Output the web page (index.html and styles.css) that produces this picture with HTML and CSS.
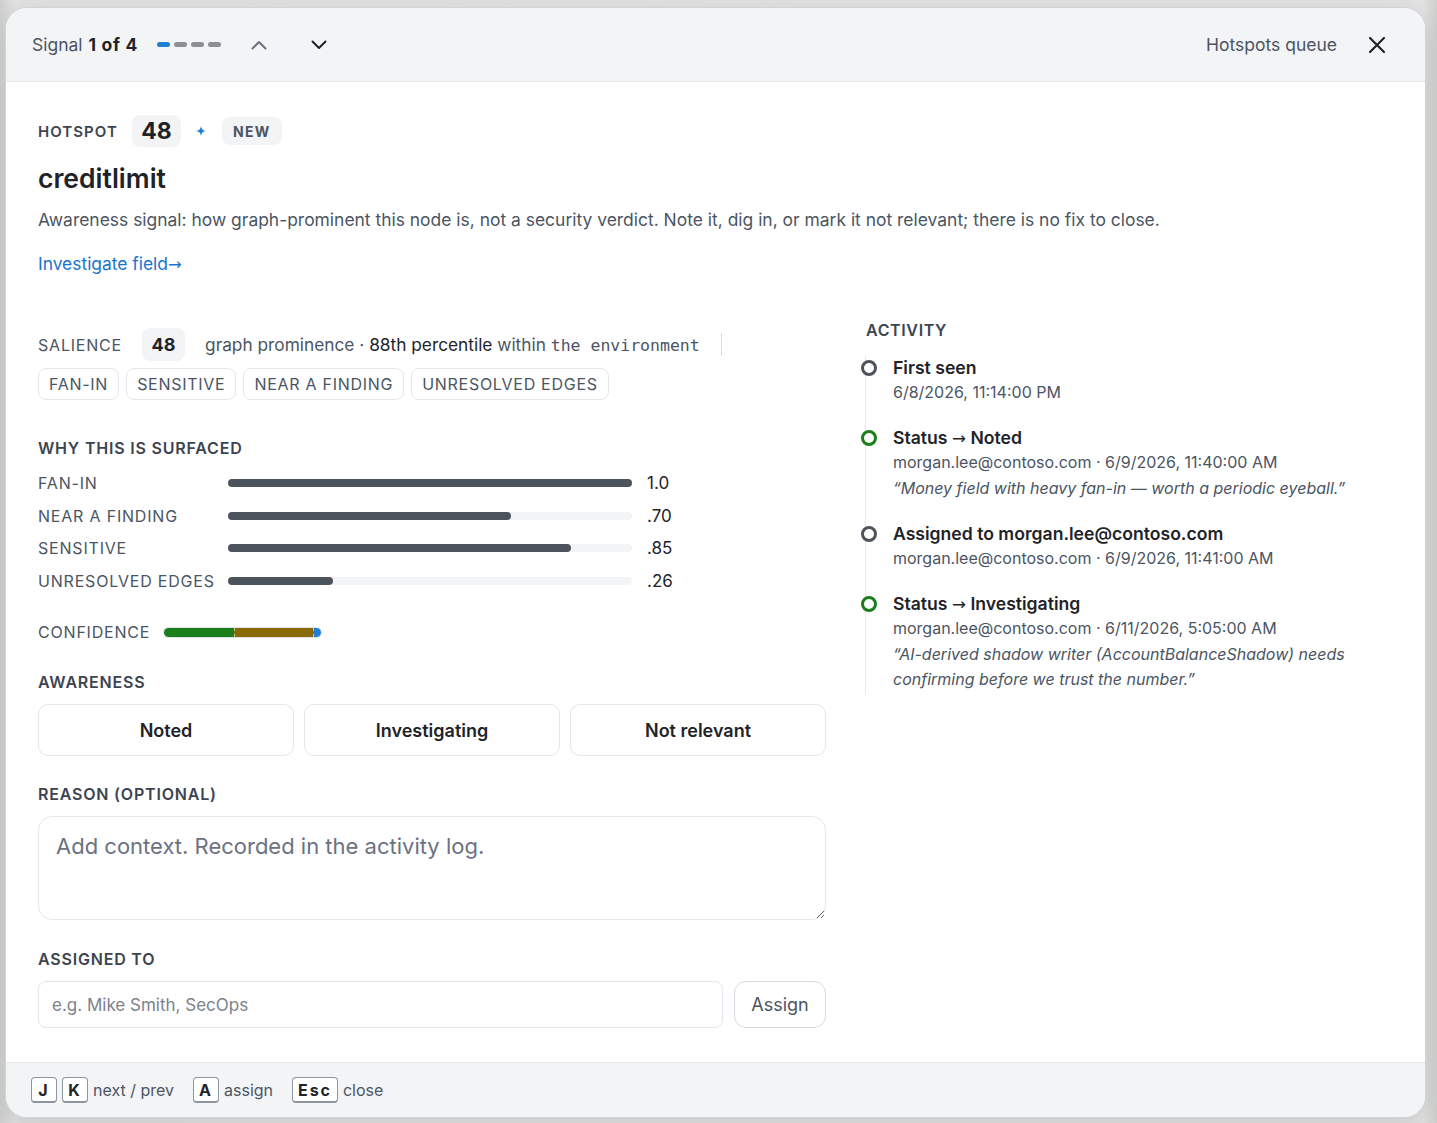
FILE: index.html
```html
<!DOCTYPE html>
<html>
<head>
	<meta charset="utf-8">
	<title>Hotspot signal</title>
	<link rel="stylesheet" href="styles.css">
</head>
<body>
	<div class="backdrop">
		<div class="dialog">
			<header class="dlg-head">
				<div class="head-left">
					<span class="signal">Signal <b>1 of 4</b></span>
					<span class="dots">
						<i class="dot on"></i><i class="dot"></i><i class="dot"></i><i class="dot"></i>
					</span>
					<button class="nav-btn up" type="button" aria-label="Previous">
						<svg width="18" height="18" viewBox="0 0 18 18"><path d="M2.5 12.5 9 6l6.5 6.5" fill="none" stroke="currentColor" stroke-width="2" stroke-linecap="round" stroke-linejoin="round"/></svg>
					</button>
					<button class="nav-btn down" type="button" aria-label="Next">
						<svg width="18" height="18" viewBox="0 0 18 18"><path d="M2.5 5.5 9 12l6.5-6.5" fill="none" stroke="currentColor" stroke-width="2" stroke-linecap="round" stroke-linejoin="round"/></svg>
					</button>
				</div>
				<div class="head-right">
					<span class="queue">Hotspots queue</span>
					<button class="close-btn" type="button" aria-label="Close">
						<svg width="18" height="18" viewBox="0 0 18 18"><path d="M2 2l14 14M16 2 2 16" fill="none" stroke="currentColor" stroke-width="2.2" stroke-linecap="round"/></svg>
					</button>
				</div>
			</header>

			<main class="dlg-body">
				<section class="intro">
					<div class="kind-row">
						<span class="kind">HOTSPOT</span>
						<span class="score">48</span>
						<svg class="spark" width="10" height="10" viewBox="0 0 10 10"><path d="M5 0C5.4 3.2 6.8 4.6 10 5 6.8 5.4 5.4 6.8 5 10 4.6 6.8 3.2 5.4 0 5 3.2 4.6 4.6 3.2 5 0Z" fill="#1f7fd6"/></svg>
						<span class="new-pill">NEW</span>
					</div>
					<h1 class="node-name">creditlimit</h1>
					<p class="blurb">Awareness signal: how graph-prominent this node is, not a security verdict. Note it, dig in, or mark it not relevant; there is no fix to close.</p>
					<a class="inv-link" href="#">Investigate field<span class="arrow">→</span></a>
				</section>

				<div class="cols">
					<div class="col-main">
						<div class="salience">
							<span class="cap">SALIENCE</span>
							<span class="sal-score">48</span>
							<span class="sal-text">graph prominence · <span class="dark">88th percentile</span> within <code>the environment</code></span>
							<span class="vsep"></span>
						</div>
						<div class="tags">
							<span class="tag">FAN-IN</span>
							<span class="tag">SENSITIVE</span>
							<span class="tag">NEAR A FINDING</span>
							<span class="tag">UNRESOLVED EDGES</span>
						</div>

						<h2 class="sec-title why">WHY THIS IS SURFACED</h2>
						<div class="factors">
							<span class="f-label">FAN-IN</span>
							<span class="track"><span class="fill" style="width: 100%"></span></span>
							<span class="f-val">1.0</span>
							<span class="f-label">NEAR A FINDING</span>
							<span class="track"><span class="fill" style="width: 70%"></span></span>
							<span class="f-val">.70</span>
							<span class="f-label">SENSITIVE</span>
							<span class="track"><span class="fill" style="width: 85%"></span></span>
							<span class="f-val">.85</span>
							<span class="f-label">UNRESOLVED EDGES</span>
							<span class="track"><span class="fill" style="width: 26%"></span></span>
							<span class="f-val">.26</span>
						</div>

						<div class="confidence">
							<span class="cap">CONFIDENCE</span>
							<span class="conf-bar">
								<span class="seg high" style="width: 70px"></span>
								<span class="seg mid" style="width: 79px"></span>
								<span class="seg low" style="width: 8px"></span>
							</span>
						</div>

						<h2 class="sec-title">AWARENESS</h2>
						<div class="aw-buttons">
							<button class="aw-btn" type="button">Noted</button>
							<button class="aw-btn" type="button">Investigating</button>
							<button class="aw-btn" type="button">Not relevant</button>
						</div>

						<h2 class="sec-title">REASON (OPTIONAL)</h2>
						<textarea class="reason" placeholder="Add context. Recorded in the activity log."></textarea>

						<h2 class="sec-title">ASSIGNED TO</h2>
						<div class="assign-row">
							<input class="assignee" type="text" placeholder="e.g. Mike Smith, SecOps">
							<button class="assign-btn" type="button">Assign</button>
						</div>
					</div>

					<aside class="col-activity">
						<h2 class="sec-title">ACTIVITY</h2>
						<ol class="timeline">
							<li class="event">
								<span class="ring"></span>
								<div class="ev-title">First seen</div>
								<div class="ev-meta">6/8/2026, 11:14:00 PM</div>
							</li>
							<li class="event">
								<span class="ring green"></span>
								<div class="ev-title">Status <span class="arrow">→</span> Noted</div>
								<div class="ev-meta">morgan.lee@contoso.com · 6/9/2026, 11:40:00 AM</div>
								<div class="ev-note">“Money field with heavy fan-in — worth a periodic eyeball.”</div>
							</li>
							<li class="event">
								<span class="ring"></span>
								<div class="ev-title">Assigned to morgan.lee@contoso.com</div>
								<div class="ev-meta">morgan.lee@contoso.com · 6/9/2026, 11:41:00 AM</div>
							</li>
							<li class="event">
								<span class="ring green"></span>
								<div class="ev-title">Status <span class="arrow">→</span> Investigating</div>
								<div class="ev-meta">morgan.lee@contoso.com · 6/11/2026, 5:05:00 AM</div>
								<div class="ev-note">“AI-derived shadow writer (AccountBalanceShadow) needs confirming before we trust the number.”</div>
							</li>
						</ol>
					</aside>
				</div>
			</main>

			<footer class="dlg-foot">
				<kbd>J</kbd><kbd>K</kbd><span class="hint">next / prev</span>
				<kbd>A</kbd><span class="hint">assign</span>
				<kbd>Esc</kbd><span class="hint">close</span>
			</footer>
		</div>
	</div>
</body>
</html>
```

FILE: styles.css
```css
* { box-sizing: border-box; }

body {
	margin: 0;
	background: #d8d9d9;
	font-family: Inter, "Noto Sans", sans-serif;
	color: #1f2328;
}

.backdrop {
	padding: 7px 11px 5px 5px;
	min-height: 1123px;
	background: linear-gradient(90deg, #cfd0d0 0, #e2e2e2 1%, #e3e3e3 99%, #cdd0cc 100%);
}

.dialog {
	width: 1421px;
	height: 1111px;
	background: #fff;
	border: 1px solid #d0d4d9;
	border-radius: 22px;
	overflow: hidden;
	display: flex;
	flex-direction: column;
	box-shadow: 0 8px 30px rgba(0, 0, 0, 0.12);
}

.arrow { font-family: "DejaVu Sans", sans-serif; font-weight: 400; font-size: 0.95em; line-height: 0; }

/* header */
.dlg-head {
	height: 74px;
	flex: none;
	display: flex;
	align-items: center;
	justify-content: space-between;
	padding: 0 38px 0 26px;
	background: #f3f4f6;
	border-bottom: 1px solid #e6e8eb;
}
.head-left, .head-right { display: flex; align-items: center; }
.signal { font-size: 17.5px; color: #4b5563; }
.signal b { color: #1f2328; font-weight: 700; letter-spacing: 0.04em; margin-left: 1px; }
.dots { display: flex; gap: 4px; margin-left: 19px; }
.dot { display: block; width: 13px; height: 5px; border-radius: 3px; background: #8b9096; }
.dot.on { background: #1f7fd6; }
.nav-btn, .close-btn {
	border: 0;
	background: none;
	padding: 0;
	display: flex;
	align-items: center;
	justify-content: center;
	cursor: pointer;
}
.nav-btn { width: 40px; height: 32px; }
.nav-btn.up { margin-left: 18px; color: #6b7280; }
.nav-btn.down { margin-left: 20px; color: #1f2328; }
.queue { font-size: 17.5px; color: #4b5563; }
.close-btn { width: 20px; height: 20px; margin-left: 30px; color: #1f2328; }

/* body */
.dlg-body {
	flex: 1;
	padding: 33px 32px 0;
}
.kind-row { display: flex; align-items: center; height: 32px; }
.kind { font-size: 15px; font-weight: 600; letter-spacing: 0.07em; color: #3d4450; }
.score {
	margin-left: 14px;
	height: 32px;
	min-width: 49px;
	padding: 0 9px;
	display: flex; align-items: center; justify-content: center;
	background: #f3f4f6;
	border-radius: 8px;
	font-size: 23px;
	font-weight: 700;
	color: #1f2328;
}
.spark { margin-left: 15px; }
.new-pill {
	margin-left: 16px;
	height: 28px;
	padding: 0 11px;
	display: flex; align-items: center;
	background: #f3f4f6;
	border-radius: 8px;
	font-size: 14px;
	font-weight: 700;
	letter-spacing: 0.1em;
	color: #4b5563;
}
.node-name {
	margin: 15px 0 0;
	font-size: 26.5px;
	line-height: 32px;
	font-weight: 600;
	color: #1f2328;
}
.blurb {
	margin: 14px 0 0;
	font-size: 17.45px;
	line-height: 24px;
	color: #4b5563;
}
.inv-link {
	display: inline-block;
	margin-top: 20px;
	font-size: 17.4px;
	line-height: 24px;
	color: #1a73cf;
	text-decoration: none;
}

.cols {
	display: flex;
	gap: 34px;
	margin-top: 44px;
}
.col-main { width: 788px; flex: none; padding-top: 8px; }
.col-activity { flex: 1; }

.cap { font-size: 16px; letter-spacing: 0.05em; color: #4b5563; }

.salience { display: flex; align-items: center; height: 33px; }
.sal-score {
	margin-left: 20px;
	width: 43px; height: 33px;
	display: flex; align-items: center; justify-content: center;
	background: #f3f4f6;
	border-radius: 8px;
	font-size: 18px; font-weight: 700;
}
.sal-text { margin-left: 20px; font-size: 17.3px; color: #4b5563; }
.sal-text .dark { color: #1f2328; }
.sal-text code { font-family: "DejaVu Sans Mono", monospace; font-size: 16.5px; }
.vsep { width: 1px; height: 23px; background: #d7dbe0; margin-left: 21px; }

.tags { display: flex; gap: 7px; margin-top: 7px; }
.tag {
	height: 32px;
	padding: 0 10px;
	display: flex; align-items: center;
	border: 1px solid #e3e6ea;
	border-radius: 8px;
	font-size: 16px;
	letter-spacing: 0.045em;
	color: #4b5563;
}

.sec-title {
	margin: 0 0 12px;
	font-size: 16px;
	line-height: 20px;
	font-weight: 600;
	letter-spacing: 0.05em;
	color: #3d4450;
}
.sec-title.why { margin: 38px 0 9px; }

.factors {
	display: grid;
	grid-template-columns: 190px 404px auto;
	grid-auto-rows: 32.6px;
	align-items: center;
}
.f-label { font-size: 16px; letter-spacing: 0.05em; color: #4b5563; }
.track { display: block; height: 8px; border-radius: 4px; background: #f3f4f6; }
.fill { display: block; height: 8px; border-radius: 4px; background: #4b535c; }
.f-val { margin-left: 15px; font-size: 17px; color: #1f2328; }

.confidence { display: flex; align-items: center; height: 20px; margin-top: 25px; }
.conf-bar {
	display: flex;
	margin-left: 13px;
	height: 11px;
	border: 1px solid #dfe2e6;
	border-radius: 6px;
	overflow: hidden;
}
.seg { display: block; height: 100%; }
.seg.high { background: #1a7f1a; }
.seg.mid { background: #8a6a05; border-left: 1px dashed #c9c9a0; }
.seg.low { background: #1f7fd6; border-left: 1px dashed #c9c9a0; }

.confidence + .sec-title { margin-top: 30px; }

.aw-buttons { display: grid; grid-template-columns: repeat(3, 1fr); gap: 10px; }
.aw-btn {
	height: 52px;
	background: #fff;
	border: 1px solid #e3e6ea;
	border-radius: 10px;
	font-family: inherit;
	font-size: 18px;
	font-weight: 600;
	color: #1f2328;
}
.aw-buttons + .sec-title { margin-top: 28px; }

.reason {
	display: block;
	width: 100%;
	height: 104px;
	padding: 16px 17px;
	border: 1px solid #e3e6ea;
	border-radius: 14px;
	font-family: inherit;
	font-size: 22px;
	color: #1f2328;
	resize: vertical;
}
.reason::placeholder { color: #6b7280; }
.reason + .sec-title { margin-top: 29px; }

.assign-row { display: flex; gap: 11px; }
.assignee {
	flex: 1;
	height: 47px;
	padding: 0 13px;
	border: 1px solid #e3e6ea;
	border-radius: 8px;
	font-family: inherit;
	font-size: 17px;
}
.assignee::placeholder { color: #7b828c; }
.assign-btn {
	width: 92px;
	height: 47px;
	background: #fff;
	border: 1px solid #d5d9de;
	border-radius: 12px;
	font-family: inherit;
	font-size: 18px;
	color: #4b5563;
}

/* activity */
.col-activity .sec-title { margin: 0 0 0 6px; letter-spacing: 0.04em; }
.timeline {
	list-style: none;
	margin: 16px 0 0 5px;
	padding: 0 0 0 27px;
	border-left: 1px solid #e8eaed;
}
.event { position: relative; margin-bottom: 21px; }
.event:last-child { margin-bottom: 0; padding-bottom: 3px; }
.ring {
	position: absolute;
	left: -32px;
	top: 4px;
	width: 16px;
	height: 16px;
	border: 3px solid #4b535c;
	border-radius: 50%;
	background: #fff;
}
.ring.green { border-color: #1a7f1a; }
.ev-title { font-size: 17.6px; line-height: 24px; font-weight: 600; color: #1f2328; }
.ev-meta { font-size: 16px; line-height: 25px; color: #4b5563; }
.ev-note { font-size: 16px; line-height: 25px; font-style: italic; color: #4b5563; width: 460px; margin-top: 1px; }

/* footer */
.dlg-foot {
	height: 55px;
	flex: none;
	display: flex;
	align-items: center;
	padding: 0 25px;
	background: #f3f4f6;
	border-top: 1px solid #e6e8eb;
}
kbd {
	height: 26px;
	min-width: 26px;
	padding: 0 5px;
	display: flex; align-items: center; justify-content: center;
	background: #fff;
	border: 1px solid #8f959c;
	border-bottom-width: 2px;
	border-radius: 4px;
	font-family: Inter, sans-serif;
	font-size: 16px;
	font-weight: 700;
	letter-spacing: 0.12em;
	color: #1f2328;
	margin-right: 5px;
}
.hint { font-size: 16px; color: #4b5563; margin-right: 19px; }
```
